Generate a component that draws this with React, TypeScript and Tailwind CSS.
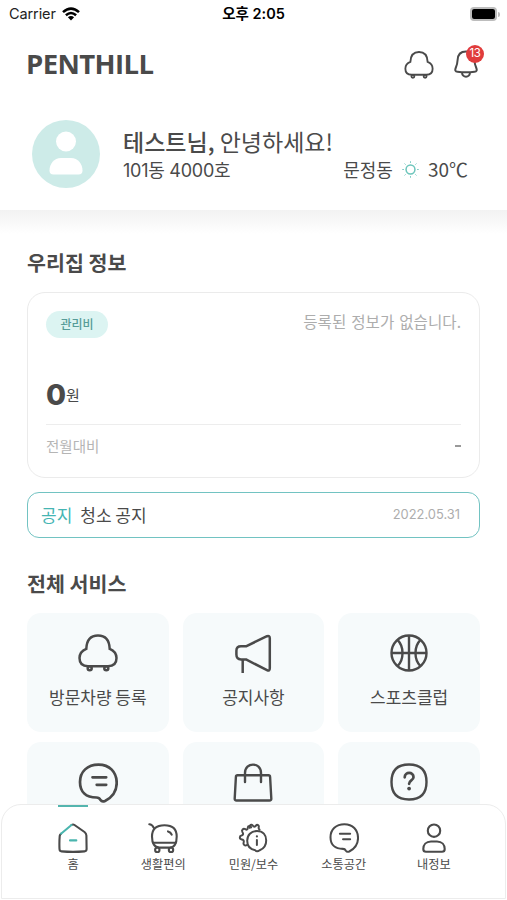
import type { ReactNode } from "react";

type IconProps = { className?: string };

function CarIcon({ className }: IconProps) {
  return (
    <svg viewBox="0 0 40 38" className={className} fill="none" stroke="#4a4a4a" strokeWidth="2.5">
      <path d="M8.3 14.8C8.6 6.5 12.5 1.4 20 1.4S31.4 6.5 31.7 14.8C36 16.5 38.5 19.5 38.5 24C38.5 29.5 35 32.2 30 32.2H10C5 32.2 1.5 29.5 1.5 24C1.5 19.5 4 16.5 8.3 14.8Z" />
      <circle cx="11.7" cy="34.3" r="2" />
      <circle cx="28.3" cy="34.3" r="2" />
    </svg>
  );
}

function BellIcon({ className }: IconProps) {
  return (
    <svg viewBox="0 0 24 28" className={className} fill="none" stroke="#4a4a4a" strokeWidth="2" strokeLinejoin="round">
      <path d="M12 1.5C6.5 1.5 3.8 5 3.6 10C3.4 14 2.8 15.6 1.7 18C.8 20.2 1.3 21.5 3.5 21.8C9 22.5 15 22.5 20.5 21.8C22.7 21.5 23.2 20.2 22.3 18C21.2 15.6 20.6 14 20.4 10C20.2 5 17.5 1.5 12 1.5Z" />
      <path d="M8 22.3C8 28.2 16 28.2 16 22.3" />
    </svg>
  );
}

function MegaphoneIcon({ className }: IconProps) {
  return (
    <svg viewBox="0 0 38 40" className={className} fill="none" stroke="#4a4a4a" strokeWidth="2.5" strokeLinejoin="round">
      <path d="M12 12.3L33 2.2Q35.8 1.2 35.8 4.2V34Q35.8 37.6 33 36.2L12 25.4H7Q2.4 25.4 2.4 20.5V16.7Q2.4 12.3 7 12.3Z" />
      <path d="M8.7 25.4V39" />
    </svg>
  );
}

function BasketballIcon({ className }: IconProps) {
  return (
    <svg viewBox="0 0 38 38" className={className} fill="none" stroke="#4a4a4a" strokeWidth="2.4">
      <circle cx="19" cy="19" r="17.5" />
      <path d="M19 1.5V36.5M1.5 19H36.5M7.5 5.8C14.2 12.5 14.2 25.5 7.5 32.2M30.5 5.8C23.8 12.5 23.8 25.5 30.5 32.2" />
    </svg>
  );
}

function ChatIcon({ className }: IconProps) {
  return (
    <svg viewBox="0 0 40 40" className={className} fill="none" stroke="#4a4a4a" strokeWidth="2.7" strokeLinejoin="round" strokeLinecap="round">
      <path d="M18.5 34.5C8 34.5 2 29 2 19C2 8.5 9.5 1.6 20.5 1.6C31.5 1.6 38.7 9 38.7 20C38.7 28 34 34.5 27 38C24.5 39 23.5 38.5 22.5 37C21.5 35 21 34.5 18.5 34.5Z" />
      <path d="M14.5 14.3H28.2M18.7 21.8H28.2" />
    </svg>
  );
}

function BagIcon({ className }: IconProps) {
  return (
    <svg viewBox="0 0 40 40" className={className} fill="none" stroke="#4a4a4a" strokeWidth="2.4" strokeLinejoin="round" strokeLinecap="round">
      <path d="M4.5 12.3H35.5Q37 12.3 37.1 14L38.3 35.5Q38.4 37.5 36.5 37.5H3.5Q1.6 37.5 1.7 35.5L2.9 14Q3 12.3 4.5 12.3Z" />
      <path d="M12 19V10C12 -1.2 28 -1.2 28 10V19" />
    </svg>
  );
}

function QuestionIcon({ className }: IconProps) {
  return (
    <svg viewBox="0 0 38 38" className={className} fill="none" stroke="#4a4a4a" strokeWidth="2.4" strokeLinecap="round">
      <path d="M19 1.5C31 1.5 36.5 7 36.5 19S31 36.5 19 36.5S1.5 31 1.5 19S7 1.5 19 1.5Z" />
      <path d="M14.7 14.3C14.8 8.5 23.6 8.6 23.5 14.2C23.4 17.5 19.1 17.4 19.1 20.8" strokeWidth="2.7" />
      <circle cx="19.1" cy="25.6" r="1.9" fill="#4a4a4a" stroke="none" />
    </svg>
  );
}

function HomeIcon() {
  return (
    <svg viewBox="0 0 30 30" className="size-[30px]" fill="none" stroke="#4a4a4a" strokeWidth="2.1" strokeLinecap="round" strokeLinejoin="round">
      <path d="M13.5 2Q15 .9 16.5 2L26.5 9Q28.3 10.5 28.4 12.5L28.6 26Q28.5 28.2 26.5 28.4Q15 29.4 3.5 28.4Q1.6 28.2 1.5 26Q1.2 19 1.7 13Q1.9 11.6 3 10.7" />
      <path d="M3 10.7L13.5 2M12 17.4H18.3" stroke="#4ab5ae" />
    </svg>
  );
}

function CartIcon() {
  return (
    <svg viewBox="0 0 30 30" className="size-[30px]" fill="none" stroke="#4a4a4a" strokeWidth="2.1" strokeLinecap="round">
      <path d="M1.3 1.2C3.4 1.3 4.8 2.5 5.8 4.8" />
      <path d="M16.5 2.2C25 2.2 28.7 6.6 28.7 13.5C28.7 20.5 26.5 24.6 21.5 24.6H11.5C6.5 24.6 4 20.5 4 13.5C4 6.6 7.5 2.2 16.5 2.2Z" />
      <path d="M5.2 19.8H27.8M20 8.4Q22.7 9 23.7 11.7" />
      <circle cx="9.3" cy="27" r="2.2" fill="#fff" />
      <circle cx="23" cy="27" r="2.2" fill="#fff" />
    </svg>
  );
}

function GearInfoIcon() {
  return (
    <svg viewBox="0 0 30 30" className="size-[30px]" fill="none" stroke="#4a4a4a" strokeWidth="2" strokeLinecap="round" strokeLinejoin="round">
      <path d="M8.5 24C6.5 25.5 4.2 23.7 5.2 21.2C5.7 19.6 4.8 18.5 3.2 18.4C.8 18.2 .7 15 3 14.5C4.8 14 5.1 12.8 4 11.2C2.6 9 4.8 7 6.8 8.2C8.4 9.2 9.3 8.5 9.3 6.8C9.3 4.7 12 4.4 12.7 6.4" transform="translate(.5 -2)" />
      <path d="M11.8 4.8C11.4 2 13.4.6 14.8 2.6C15.8 4 16.7 3.9 17.8 2.7C19.4 1 21.3 2.3 20.7 4.5Q20.4 5.8 21.5 6.6" />
      <path d="M19 8C25 8 28.2 12 28.2 17.5C28.2 22 25.7 25.7 21.7 27.3C19.8 28.7 18.2 28.6 17.3 27.2C12.5 26.4 9.2 23 9.2 17.8C9.2 12 13 8 19 8Z" />
      <path d="M18.9 17V22" />
      <circle cx="18.9" cy="13.4" r="1.1" fill="#4a4a4a" stroke="none" />
    </svg>
  );
}

function PersonIcon() {
  return (
    <svg viewBox="0 0 30 30" className="size-[30px]" fill="none" stroke="#4a4a4a" strokeWidth="2.1">
      <circle cx="15" cy="7.7" r="6.2" />
      <path d="M12 18.5H18C23 18.5 25.7 22 25.7 26Q25.7 28.8 23 28.8H7Q4.3 28.8 4.3 26C4.3 22 7 18.5 12 18.5Z" />
    </svg>
  );
}

function StatusBar() {
  return (
    <div className="grid h-7 shrink-0 grid-cols-3 items-center px-[9px] font-['Inter','Noto_Sans_CJK_KR',sans-serif] text-black">
      <div className="flex items-center gap-[6px] text-[14.5px] leading-5 tracking-[-0.1px] text-[#222]">
        Carrier
        <svg viewBox="0 0 18 14" className="h-[14px] w-[18px]" fill="none" stroke="#000" strokeWidth="2.6">
          <path d="M1 5.1Q9-2 17 5.1M3.9 8.2Q9 3.8 14.1 8.2" />
          <path d="M9 13.5L5.9 10.3Q9 7.9 12.1 10.3Z" fill="#000" stroke="none" />
        </svg>
      </div>
      <div className="text-center text-[14.5px] font-semibold leading-5 whitespace-nowrap">오후 2:05</div>
      <div className="-mr-[2px] flex items-center justify-end">
        <div className="h-[14px] w-[27px] rounded-[4px] border-2 border-[#bdbdbd]">
          <div className="h-full rounded-[2px] bg-black" />
        </div>
        <div className="ml-px h-[5px] w-[2px] rounded-r bg-[#bdbdbd]" />
      </div>
    </div>
  );
}

function ServiceCard({ icon, label }: { icon: ReactNode; label?: string }) {
  return (
    <div className="flex h-[119px] flex-col items-center rounded-[14px] bg-[#f6fafb] pt-[21px]">
      {icon}
      <span className="mt-[13px] text-[17px] leading-6 whitespace-nowrap">{label}</span>
    </div>
  );
}

const tabs = [
  { label: "홈", icon: <HomeIcon />, active: true },
  { label: "생활편의", icon: <CartIcon /> },
  { label: "민원/보수", icon: <GearInfoIcon /> },
  { label: "소통공간", icon: <ChatIcon className="size-[30px]" /> },
  { label: "내정보", icon: <PersonIcon /> },
];

export default function App() {
  return (
    <main className="relative flex h-[900px] w-full flex-col overflow-hidden bg-white font-['Noto_Sans_CJK_KR',sans-serif] text-[#4a4a4a]">
      <StatusBar />

      <header className="flex h-[72px] shrink-0 items-center justify-between pr-[28px] pl-[26px]">
        <h1 className="-mt-px font-['Open_Sans',sans-serif] text-[27.5px] font-bold tracking-[-0.6px]">PENTHILL</h1>
        <div className="flex items-center gap-[20px]">
          <CarIcon className="mt-px h-[28px] w-[30px]" />
          <div className="relative mr-px">
            <BellIcon className="h-[28px] w-6" />
            <span className="absolute -top-[5px] left-[12px] flex size-[18px] items-center justify-center rounded-full bg-[#e03c3c] font-['Inter',sans-serif] text-[11.5px] tracking-[-0.3px] text-white">
              13
            </span>
          </div>
        </div>
      </header>

      <section className="flex h-[110px] shrink-0 pt-5 pr-[39px] pl-8">
        <svg viewBox="0 0 68 68" className="size-[68px] shrink-0">
          <circle cx="34" cy="34" r="34" fill="#cdebe8" />
          <circle cx="34" cy="21.5" r="10" fill="#fff" />
          <path d="M29 38H39C46 38 50.5 44 50.5 50.5Q50.5 54.5 46.5 54.5H21.5Q17.5 54.5 17.5 50.5C17.5 44 22 38 29 38Z" fill="#fff" />
        </svg>
        <div className="ml-[23px] flex-1 pt-[5px]">
          <p className="text-[23px] leading-8 whitespace-nowrap">
            <span className="font-medium">테스트님,</span> 안녕하세요!
          </p>
          <div className="flex items-start justify-between text-[18px] leading-6">
            <span className="pt-[2px] font-['Inter','Noto_Sans_CJK_KR',sans-serif] tracking-[-0.25px]">101동 4000호</span>
            <span className="flex items-center gap-[9px]">
              문정동
              <svg viewBox="0 0 18 18" className="size-[17px]" fill="none" stroke="#6cc5bb">
                <circle cx="9" cy="9" r="4.7" strokeWidth="1.6" />
                <path d="M9 .3V2M9 16V17.7M.3 9H2M16 9H17.7M2.7 2.7L3.8 3.8M14.2 14.2L15.3 15.3M2.7 15.3L3.8 14.2M14.2 3.8L15.3 2.7" strokeWidth="1" />
              </svg>
              <span className="text-[19px]">30℃</span>
            </span>
          </div>
        </div>
      </section>

      <div className="h-6 shrink-0 bg-linear-to-b from-[#f2f2f2] to-white" />

      <div className="px-[27px] pt-[13px]">
        <h2 className="text-[20.6px] leading-[30px] font-bold">우리집 정보</h2>

        <section className="mt-[15px] h-[186px] rounded-[18px] border-[1.5px] border-[#ebebeb] px-[18px] pt-[18px]">
          <div className="flex items-start justify-between">
            <span className="flex h-[27px] w-[62px] items-center justify-center rounded-full bg-[#dcf4f2] pb-px text-[12px] font-medium text-[#569c98]">
              관리비
            </span>
            <span className="text-[15.6px] leading-[20px] text-[#adadad] [word-spacing:1.5px]">등록된 정보가 없습니다.</span>
          </div>
          <div className="mt-[39px] flex h-[36px] items-center">
            <span className="font-['Inter',sans-serif] text-[29px] font-extrabold">0</span>
            <span className="text-[15px]">원</span>
          </div>
          <div className="mt-[11px] flex h-[46px] items-center justify-between border-t-[1.5px] border-[#ededed] pb-[3px] text-[14.5px] text-[#b5b5b5]">
            전월대비
            <span className="h-[2px] w-[6px] bg-[#999]" />
          </div>
        </section>

        <section className="mt-[14px] flex h-[46px] items-center rounded-[12px] border-[1.5px] border-[#72c3c2] pr-[19px] pb-px pl-[13px] text-[17px]">
          <span className="text-[#45b5b3]">공지</span>
          <span className="ml-2">청소 공지</span>
          <span className="ml-auto pt-px font-['Inter',sans-serif] text-[12.9px] text-[#adadad]">2022.05.31</span>
        </section>

        <h2 className="mt-[30px] text-[20.6px] leading-[30px] font-bold">전체 서비스</h2>

        <section className="mt-[15px] grid grid-cols-3 gap-x-[14px] gap-y-[10px]">
          <ServiceCard icon={<CarIcon className="h-[38px] w-10" />} label="방문차량 등록" />
          <ServiceCard icon={<MegaphoneIcon className="-mb-[2px] h-[40px] w-[38px]" />} label="공지사항" />
          <ServiceCard icon={<BasketballIcon className="size-[38px]" />} label="스포츠클럽" />
          <ServiceCard icon={<ChatIcon className="size-10" />} />
          <ServiceCard icon={<BagIcon className="size-10" />} />
          <ServiceCard icon={<QuestionIcon className="size-[38px]" />} />
        </section>
      </div>

      <nav className="absolute inset-x-0 bottom-0 mx-px mb-px grid h-[95px] grid-cols-5 rounded-t-[20px] border-[1.5px] border-[#ececec] bg-white px-[26px]">
        {tabs.map((tab) => (
          <div key={tab.label} className="relative flex flex-col items-center pt-[18px]">
            {tab.active && <span className="absolute top-0 h-[2px] w-[30px] bg-[#54b5ae]" />}
            {tab.icon}
            <span className="mt-[3px] text-[12.2px] leading-4 whitespace-nowrap">{tab.label}</span>
          </div>
        ))}
      </nav>
    </main>
  );
}
